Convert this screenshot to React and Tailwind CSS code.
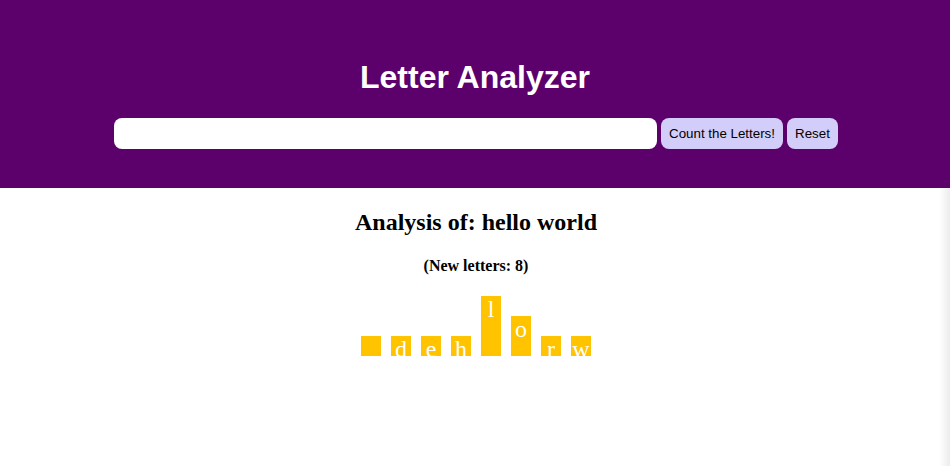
import React, { useState } from 'react';

const countLetters = (text) => {
  const counts = {};
  for (const ch of text.toLowerCase()) {
    counts[ch] = (counts[ch] || 0) + 1;
  }
  return Object.keys(counts)
    .sort()
    .map((ch) => ({ ch, count: counts[ch] }));
};

export default function App() {
  const [input, setInput] = useState('');
  const [analyzed, setAnalyzed] = useState('hello world');

  const letters = countLetters(analyzed);

  return (
    <div className="min-h-[466px] font-['Liberation_Serif',serif] bg-[linear-gradient(to_right,#ffffff_calc(100%-11px),#ececec)]">
      {/* Header */}
      <header className="bg-[#5c006c] h-[188px] flex flex-col items-center pt-[59px]">
        <h1 className="font-['Liberation_Sans',Arial,sans-serif] font-bold text-[32px] leading-[37px] text-white">
          Letter Analyzer
        </h1>
        <div className="flex items-center gap-[4px] mt-[22px] ml-[2px]">
          <input
            value={input}
            onChange={(e) => setInput(e.target.value)}
            className="w-[543px] h-[31px] bg-white rounded-[8px] px-2 outline-none font-['Liberation_Sans',Arial,sans-serif] text-[13.33px]"
          />
          <button
            onClick={() => input && setAnalyzed(input)}
            className="h-[31px] w-[122px] rounded-[8px] bg-[#d3cef9] text-black font-['Liberation_Sans',Arial,sans-serif] text-[13.33px]"
          >
            Count the Letters!
          </button>
          <button
            onClick={() => setInput('')}
            className="h-[31px] w-[51px] rounded-[8px] bg-[#d3cef9] text-black font-['Liberation_Sans',Arial,sans-serif] text-[13.33px]"
          >
            Reset
          </button>
        </div>
      </header>

      {/* Analysis */}
      <section className="flex flex-col items-center pt-[20px] text-black">
        <h2 className="font-bold text-[24px] leading-[28px] ml-[2px]">Analysis of: {analyzed}</h2>
        <h3 className="font-bold text-[16px] leading-[18px] mt-[21px] ml-[2px]">
          (New letters: {letters.length})
        </h3>
        <div className="flex items-end gap-[10px] mt-[21px] ml-[2px]">
          {letters.map((l) => (
            <div
              key={l.ch}
              className="w-[20px] bg-[#ffc300] overflow-hidden text-white text-[24px] leading-[27px] text-center"
              style={{ height: `${l.count * 20}px` }}
            >
              {l.ch}
            </div>
          ))}
        </div>
      </section>
    </div>
  );
}
